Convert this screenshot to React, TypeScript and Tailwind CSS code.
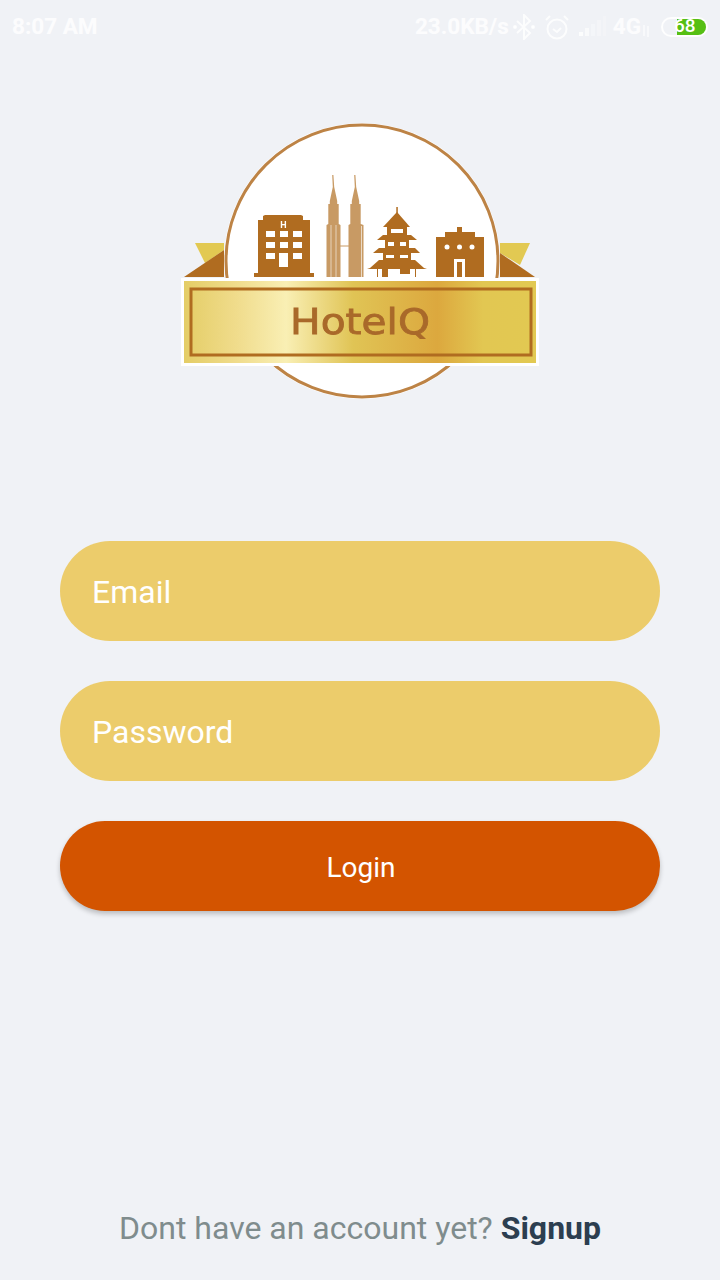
const font = "font-['Roboto',sans-serif]";

function Logo() {
  const brown = "#b06c20";
  const tan = "#c89a64";
  return (
    <svg width={380} height={300} viewBox="170 110 380 300" className="blur-[0.6px]" fill="none">
      <defs>
        <linearGradient id="gold" x1="0" y1="0" x2="1" y2="0">
          <stop offset="0" stopColor="#e4cd66" />
          <stop offset="0.15" stopColor="#f0dc8c" />
          <stop offset="0.29" stopColor="#f9efb4" />
          <stop offset="0.48" stopColor="#e0c455" />
          <stop offset="0.72" stopColor="#dca83e" />
          <stop offset="0.85" stopColor="#e2c752" />
          <stop offset="1" stopColor="#e2c952" />
        </linearGradient>
      </defs>

      {/* ribbon tails */}
      <polygon points="195,243 224,243 224,250 205,263" fill="#e2c952" />
      <polygon points="184,277 224,250 224,277" fill={brown} />
      <polygon points="500,243 530,243 520,265 500,253" fill="#e2c952" />
      <polygon points="500,253 535,277 500,277" fill={brown} />

      {/* badge */}
      <circle cx="362" cy="261" r="138" fill="#fff" />
      <circle cx="362" cy="261" r="136" fill="#fff" stroke="#bd8345" strokeWidth="3" />

      {/* hotel */}
      <path d="M258 220h5v-4l2-1h36l2 1v4h7v53h4v4h-60v-4h4z" fill={brown} />
      <g fill="#fff">
        <rect x="266" y="231" width="9" height="6" />
        <rect x="280" y="231" width="8" height="6" />
        <rect x="293" y="231" width="9" height="6" />
        <rect x="266" y="242" width="9" height="6" />
        <rect x="280" y="242" width="8" height="6" />
        <rect x="293" y="242" width="9" height="6" />
        <rect x="266" y="253" width="9" height="6" />
        <rect x="279" y="253" width="9" height="14" />
        <rect x="293" y="253" width="9" height="6" />
        <text x="283.500" y="228" textAnchor="middle" fontSize="9" fontFamily="Roboto" fontWeight="700">H</text>
      </g>

      {/* twin towers */}
      <path d="M332.200 175h1.200l.8 12 3 14v3h1.500v20l1.800 1v52h-14v-52l1.800-1v-20h1.500v-3l3-14z" fill={tan} />
      <path d="M354.200 175h1.200l.8 12 3 14v3h1.500v20l2.800 1v52h-15v-52l1.800-1v-20h1.500v-3l3-14z" fill={tan} />
      <path d="M331 225v52M336 225v52" stroke="#fff" strokeOpacity="0.7" strokeWidth="0.8" />
      <path d="M361.500 226v51" stroke="#fff" strokeOpacity="0.8" strokeWidth="0.8" />
      <path d="M340 246h9" stroke={tan} strokeWidth="1" />

      {/* pagoda */}
      <g fill={brown}>
        <rect x="396.300" y="207" width="1.500" height="6" />
        <polygon points="397,212 410,227 383,227" />
        <rect x="387" y="227" width="20" height="8" />
        <polygon points="383,235 411,235 417,240 377,240" />
        <rect x="385" y="240" width="24" height="8" />
        <polygon points="379,248 415,248 420,253 373,253" />
        <rect x="383" y="253" width="28" height="7" />
        <polygon points="379,260 415,260 424,268 427,269 367,269 370,268" />
        <rect x="382" y="269" width="6" height="8" />
        <rect x="400" y="269" width="10" height="5" />
        <rect x="377" y="269" width="1" height="8" />
        <rect x="415" y="269" width="1" height="8" />
      </g>
      <g fill="#fff">
        <rect x="391" y="229" width="12" height="4" />
        <rect x="388" y="242" width="6" height="4" />
        <rect x="400" y="242" width="6" height="4" />
        <rect x="386" y="255" width="8" height="3" />
        <rect x="400" y="255" width="8" height="3" />
      </g>

      {/* right building */}
      <path d="M436 237h9v-5h12v-5h5v5h13v5h9v40h-48z" fill={brown} />
      <g fill="#fff">
        <circle cx="447" cy="247" r="2.500" />
        <circle cx="459.500" cy="247" r="2.500" />
        <circle cx="472" cy="247" r="2.500" />
        <rect x="454" y="259" width="11" height="18" />
      </g>
      <rect x="457" y="262" width="5" height="15" fill={brown} />

      {/* banner */}
      <rect x="181" y="278" width="358" height="88" fill="#fff" />
      <rect x="184" y="281" width="352" height="82" fill="url(#gold)" />
      <rect x="191" y="289" width="340" height="66" stroke={brown} strokeWidth="3" />
      <text
        x="360"
        y="334"
        textAnchor="middle"
        fontFamily="DejaVu Sans"
        fontSize="36"
        textLength="140"
        lengthAdjust="spacingAndGlyphs"
        fill="#a9692a"
        stroke="#a9692a"
        strokeWidth="0.8"
      >
        HotelQ
      </text>
    </svg>
  );
}

function StatusBar() {
  return (
    <div className="flex h-[50px] items-center justify-between px-3 pt-[3px] text-[22.5px] font-bold text-white/80">
      <span>8:07 AM</span>
      <div className="flex items-center">
        <span>23.0KB/s</span>
        {/* bluetooth */}
        <svg width={24} height={26} viewBox="0 0 24 26" className="ml-[3px]" fill="none" stroke="#fff" strokeOpacity="0.8" strokeWidth="2">
          <path d="M5 7l13 12-6 6V1l6 6L5 19" />
          <circle cx="3" cy="13" r="1" fill="#fff" />
          <circle cx="21" cy="13" r="1" fill="#fff" />
        </svg>
        {/* alarm */}
        <svg width={26} height={26} viewBox="0 0 26 26" className="ml-2" fill="none" stroke="#fff" strokeOpacity="0.8" strokeWidth="2">
          <circle cx="13" cy="15" r="9.500" />
          <path d="M9 15l4 3 4-4M2 6l4-4M24 6l-4-4" />
        </svg>
        {/* signal */}
        <svg width={28} height={22} viewBox="0 0 28 22" className="ml-[9px]" fill="#fff">
          <rect x="0" y="16" width="4" height="4" opacity="0.8" />
          <rect x="6" y="12" width="4" height="8" opacity="0.6" />
          <rect x="12" y="8" width="4" height="12" opacity="0.3" />
          <rect x="18" y="4" width="4" height="16" opacity="0.25" />
          <rect x="24" y="0" width="3" height="20" opacity="0.2" />
        </svg>
        <span className="ml-[6px]">4G</span>
        <svg width={10} height={12} viewBox="0 0 10 12" className="mt-2" stroke="#fff" strokeOpacity="0.7" strokeWidth="1.500">
          <path d="M3 0v11M7 1v11" />
        </svg>
        {/* battery */}
        <div className="relative ml-[10px] h-5 w-[47px] rounded-full border-2 border-white/90">
          <div className="absolute inset-y-0 right-0 w-[29px] rounded-r-full bg-[#56bf14]" />
          <span className="absolute inset-y-0 left-[11px] flex items-center text-[19px] font-medium text-white">68</span>
        </div>
      </div>
    </div>
  );
}

export default function App() {
  return (
    <div className={`${font} flex h-[1280px] flex-col bg-[#f0f2f6]`}>
      <StatusBar />

      <div className="flex justify-center pt-[60px]">
        <Logo />
      </div>

      <div className="mt-[131px] flex flex-col gap-10 px-[60px]">
        <div className="flex h-[100px] items-center rounded-[50px] bg-[#ecCC6b] px-8 pt-[2px] text-[32px] text-white">Email</div>
        <div className="flex h-[100px] items-center rounded-[50px] bg-[#ecCC6b] px-8 pt-[2px] text-[32px] text-white">Password</div>
        <button className="flex h-[90px] items-center justify-center rounded-[45px] bg-[#d35400] pt-1 pl-[2px] text-[28px] text-white shadow-[0_3px_5px_rgba(0,0,0,0.22)]">
          Login
        </button>
      </div>

      <div className="mt-auto flex justify-center pb-[30px] text-[32px] leading-[44px] text-[#7f8c8d]">
        <span>
          Dont have an account yet? <span className="font-bold text-[#2c3e50]">Signup</span>
        </span>
      </div>
    </div>
  );
}
